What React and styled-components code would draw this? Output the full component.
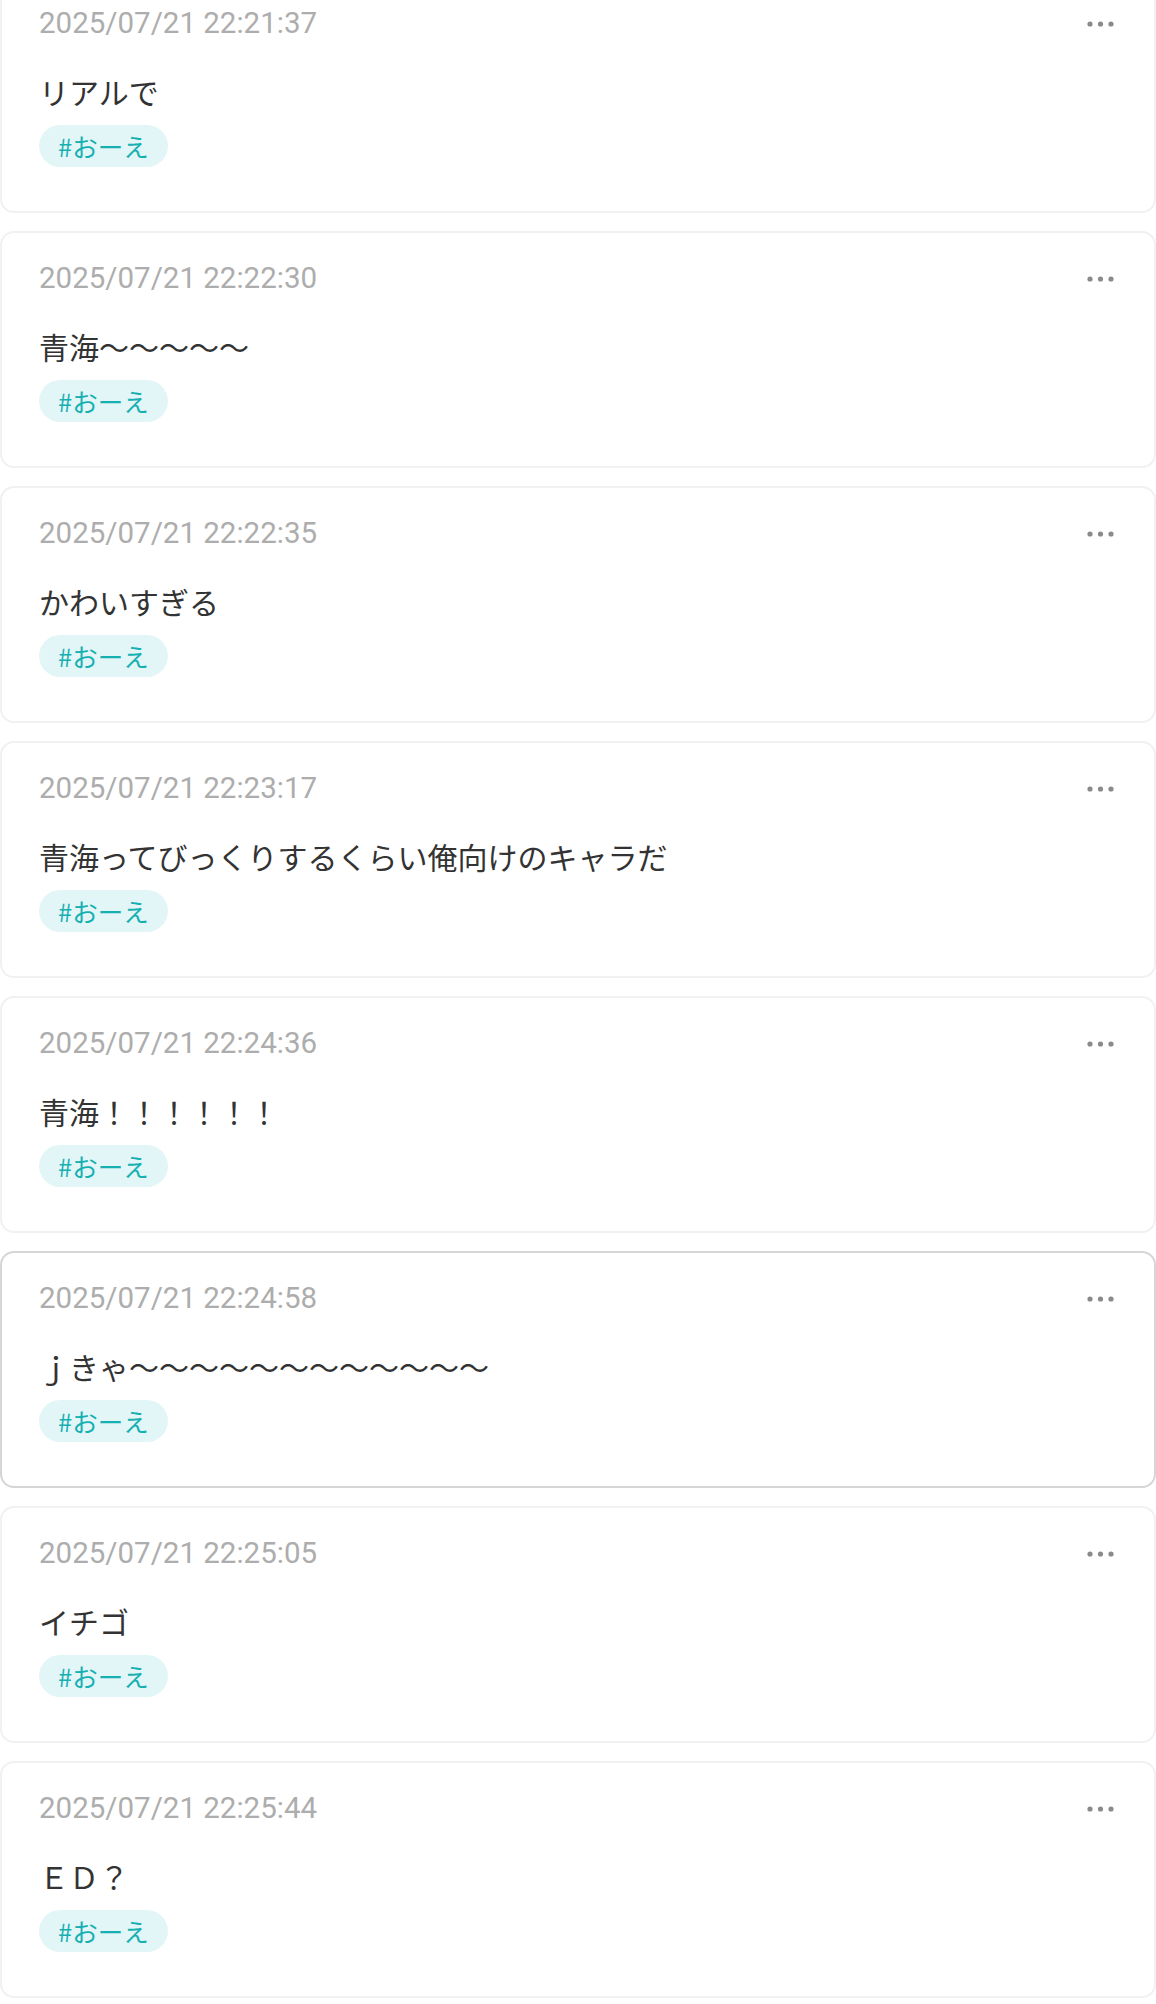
import React from "react";
import styled, { createGlobalStyle } from "styled-components";

const posts = [
  { id: 1, date: "2025/07/21 22:21:37", text: "リアルで", tag: "おーえ" },
  { id: 2, date: "2025/07/21 22:22:30", text: "青海～～～～～", tag: "おーえ" },
  { id: 3, date: "2025/07/21 22:22:35", text: "かわいすぎる", tag: "おーえ" },
  {
    id: 4,
    date: "2025/07/21 22:23:17",
    text: "青海ってびっくりするくらい俺向けのキャラだ",
    tag: "おーえ",
  },
  { id: 5, date: "2025/07/21 22:24:36", text: "青海！！！！！！", tag: "おーえ" },
  {
    id: 6,
    date: "2025/07/21 22:24:58",
    text: "ｊきゃ～～～～～～～～～～～～",
    tag: "おーえ",
    active: true,
  },
  { id: 7, date: "2025/07/21 22:25:05", text: "イチゴ", tag: "おーえ" },
  { id: 8, date: "2025/07/21 22:25:44", text: "ＥＤ？", tag: "おーえ" },
];

export default function App() {
  return (
    <>
      <GlobalStyle />
      <PostList>
        {posts.map((post) => (
          <PostCard key={post.id} $active={post.active}>
            <CardHead>
              <PostDate>{post.date}</PostDate>
              <MoreButton aria-label="more">
                <svg width="27" height="8" viewBox="0 0 27 8">
                  <circle cx="3" cy="4" r="2.6" fill="#8a8a8a" />
                  <circle cx="13.5" cy="4" r="2.6" fill="#8a8a8a" />
                  <circle cx="24" cy="4" r="2.6" fill="#8a8a8a" />
                </svg>
              </MoreButton>
            </CardHead>
            <PostText>{post.text}</PostText>
            <TagRow>
              <Tag>#{post.tag}</Tag>
            </TagRow>
          </PostCard>
        ))}
      </PostList>
    </>
  );
}

const GlobalStyle = createGlobalStyle`
  body {
    margin: 0;
    background: #ffffff;
    font-family: Roboto, "Noto Sans CJK JP", sans-serif;
    overflow: hidden;
  }
`;

const PostList = styled.div`
  display: flex;
  flex-direction: column;
  gap: 18px;
  margin-top: -24px;
`;

const PostCard = styled.div`
  border: 2px solid ${(p) => (p.$active ? "#d6d6d6" : "#f1f1f1")};
  border-radius: 14px;
  background: #fff;
  padding: 28px 37px 42px 37px;
  height: 237px;
  box-sizing: border-box;
`;

const CardHead = styled.div`
  display: flex;
  justify-content: space-between;
  align-items: center;
  height: 34px;
`;

const PostDate = styled.span`
  font-family: Roboto, "Noto Sans CJK JP", sans-serif;
  font-size: 29.5px;
  color: #adadad;
  line-height: 34px;
`;

const MoreButton = styled.button`
  border: none;
  background: none;
  padding: 0;
  display: flex;
  align-items: center;
  cursor: pointer;
  margin: 2px 3px 0 0;
`;

const PostText = styled.p`
  margin: 29px 0 0;
  font-family: "Noto Sans CJK JP", sans-serif;
  font-size: 30px;
  line-height: 45px;
  color: #333;
`;

const TagRow = styled.div`
  display: flex;
  margin-top: 11px;
`;

const Tag = styled.span`
  background: #e3f6f7;
  color: #16b0b2;
  font-family: "Noto Sans CJK JP", sans-serif;
  font-size: 25.5px;
  line-height: 42px;
  height: 42px;
  padding: 0 19px;
  border-radius: 21px;
  box-sizing: border-box;
`;
